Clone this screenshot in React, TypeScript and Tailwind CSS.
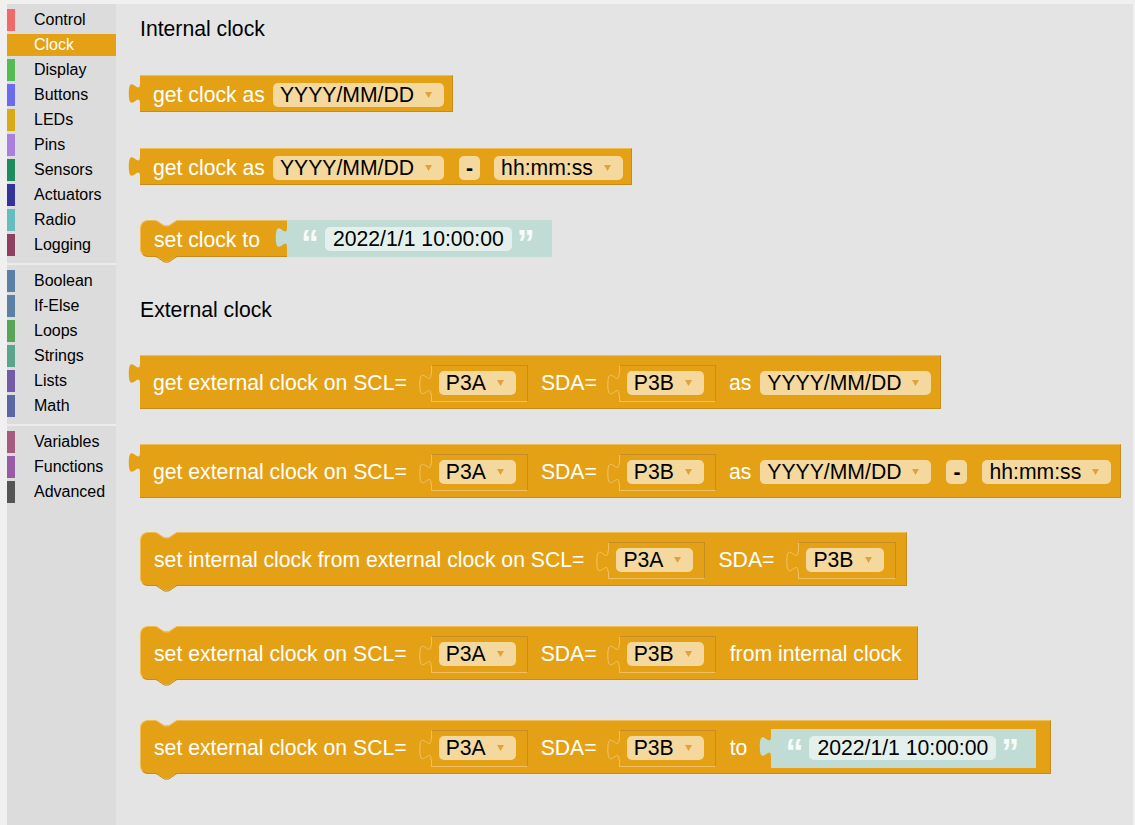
import clsx from 'clsx';

const groups = [
  [
    { name: 'Control', strip: 'bg-[#ef6b6b]' },
    { name: 'Clock', strip: 'bg-[#e5a116]', active: true },
    { name: 'Display', strip: 'bg-[#55bb55]' },
    { name: 'Buttons', strip: 'bg-[#6b6bef]' },
    { name: 'LEDs', strip: 'bg-[#d6ab15]' },
    { name: 'Pins', strip: 'bg-[#a980e0]' },
    { name: 'Sensors', strip: 'bg-[#1f8c5e]' },
    { name: 'Actuators', strip: 'bg-[#34339b]' },
    { name: 'Radio', strip: 'bg-[#66bdbd]' },
    { name: 'Logging', strip: 'bg-[#8f3f60]' },
  ],
  [
    { name: 'Boolean', strip: 'bg-[#5b80a5]' },
    { name: 'If-Else', strip: 'bg-[#5b80a5]' },
    { name: 'Loops', strip: 'bg-[#5ba55b]' },
    { name: 'Strings', strip: 'bg-[#5ba58c]' },
    { name: 'Lists', strip: 'bg-[#745ba5]' },
    { name: 'Math', strip: 'bg-[#5b67a5]' },
  ],
  [
    { name: 'Variables', strip: 'bg-[#a55b80]' },
    { name: 'Functions', strip: 'bg-[#995ba5]' },
    { name: 'Advanced', strip: 'bg-[#555555]' },
  ],
];

const ORANGE = '#e5a116';
const TEAL = '#c0dcd4';

export default function App() {
  return (
    <div className="flex h-[825px] w-[1135px] overflow-hidden bg-[#f0f0f0] pl-[7px] pr-[2px] pt-[4px] font-['Liberation_Sans',Arial,sans-serif]">
      <Toolbox />
      <main className="flex flex-1 flex-col items-start bg-[#e4e4e4] pl-[24px] pt-[12px]">
        <h2 className="text-[21.2px] leading-[26px] text-black">Internal clock</h2>

        <Block className="mt-[33px] h-[37px] pl-[13px] pr-[8px]">
          <span>get clock as</span>
          <Drop label="YYYY/MM/DD" className="ml-[8px]" />
        </Block>

        <Block className="mt-[36px] h-[37px] pl-[13px] pr-[8px]">
          <span>get clock as</span>
          <Drop label="YYYY/MM/DD" className="ml-[8px]" />
          <Dash className="ml-[15px]" />
          <Drop label="hh:mm:ss" className="ml-[14px]" />
        </Block>

        <Block statement open className="mt-[35px] h-[37px] items-stretch pl-[13px]">
          <span className="mt-[2px] self-center">set clock to</span>
          <TextBlock className="-my-[1px] ml-[27px]" />
        </Block>

        <h2 className="mt-[40px] text-[21.2px] leading-[26px] text-black">External clock</h2>

        <Block className="mt-[32px] h-[54px] pl-[13px] pr-[9px]">
          <span>get external clock on SCL=</span>
          <Pin pin="P3A" className="ml-[24px]" />
          <span className="ml-[13px]">SDA=</span>
          <Pin pin="P3B" className="ml-[22px]" />
          <span className="ml-[13px]">as</span>
          <Drop label="YYYY/MM/DD" className="ml-[9px]" />
        </Block>

        <Block className="mt-[35px] h-[54px] pl-[13px] pr-[9px]">
          <span>get external clock on SCL=</span>
          <Pin pin="P3A" className="ml-[24px]" />
          <span className="ml-[13px]">SDA=</span>
          <Pin pin="P3B" className="ml-[22px]" />
          <span className="ml-[13px]">as</span>
          <Drop label="YYYY/MM/DD" className="ml-[9px]" />
          <Dash className="ml-[15px]" />
          <Drop label="hh:mm:ss" className="ml-[15px]" />
        </Block>

        <Block statement className="mt-[34px] h-[54px] pl-[13px] pr-[10px]">
          <span>set internal clock from external clock on SCL=</span>
          <Pin pin="P3A" className="ml-[24px]" />
          <span className="ml-[13px]">SDA=</span>
          <Pin pin="P3B" className="ml-[24px]" />
        </Block>

        <Block statement className="mt-[40px] h-[54px] pl-[13px] pr-[15px]">
          <span>set external clock on SCL=</span>
          <Pin pin="P3A" className="ml-[24px]" />
          <span className="ml-[13px]">SDA=</span>
          <Pin pin="P3B" className="ml-[22px]" />
          <span className="ml-[14px]">from internal clock</span>
        </Block>

        <Block statement className="mt-[40px] h-[54px] pl-[13px] pr-[14px]">
          <span>set external clock on SCL=</span>
          <Pin pin="P3A" className="ml-[24px]" />
          <span className="ml-[13px]">SDA=</span>
          <Pin pin="P3B" className="ml-[22px]" />
          <span className="ml-[14px]">to</span>
          <TextBlock className="ml-[24px] h-[39px]" />
        </Block>
      </main>
    </div>
  );
}

function Toolbox() {
  return (
    <aside className="flex h-full w-[109px] shrink-0 flex-col bg-[#dcdcdc] pt-[5px] text-[16px] text-black">
      {groups.map((group, gi) => (
        <div key={gi} className="flex flex-col">
          {gi > 0 && <div className="mb-[5px] mt-[4px] h-[2px] bg-[#ececec]" />}
          {group.map((cat) => (
            <div
              key={cat.name}
              className={clsx('mb-[3px] flex h-[22px] items-center leading-[22px]', cat.active && 'bg-[#e5a116] text-white')}
            >
              <div className={clsx('h-full w-[8px]', cat.strip)} />
              <span className="ml-[19px]">{cat.name}</span>
            </div>
          ))}
        </div>
      ))}
    </aside>
  );
}

function Block({
  children,
  statement,
  open,
  className,
}: {
  children: React.ReactNode;
  statement?: boolean;
  open?: boolean;
  className?: string;
}) {
  return (
    <div
      className={clsx(
        'relative flex items-center border-b border-t border-b-[#c68c18] border-t-[#efbd58] bg-[#e5a116] text-[21.2px] leading-none text-white',
        !open && 'border-r border-r-[#c68c18] pt-[2px]',
        statement && 'rounded-l-[8px] border-l border-l-[#efbd58]',
        className,
      )}
    >
      {statement ? (
        <>
          <svg className="absolute left-[15px] top-[-1px]" width="22" height="7" viewBox="0 0 22 7">
            <path d="M0,0 L8.4,5.6 L12.6,5.6 L21,0 Z" fill="#e4e4e4" />
            <polyline points="0,0.5 8.4,6.1 12.6,6.1 21,0.5" fill="none" stroke="#efbd58" strokeWidth="1" />
          </svg>
          <svg className="absolute bottom-[-7px] left-[15px]" width="22" height="7" viewBox="0 0 22 7">
            <path d="M0,0 L8.4,5.6 L12.6,5.6 L21,0 Z" fill={ORANGE} />
            <polyline points="0,0.5 8.4,6.1 12.6,6.1 21,0.5" fill="none" stroke="#c68c18" strokeWidth="1" />
          </svg>
        </>
      ) : (
        <OutputTab fill={ORANGE} className="left-[-12px] top-[0px]" />
      )}
      {children}
    </div>
  );
}

function OutputTab({ fill, stroke, className }: { fill: string; stroke?: string; className?: string }) {
  return (
    <svg className={clsx('absolute overflow-visible', className)} width="13" height="30" viewBox="0 0 13 30">
      <path d="M12,7 C12,21 0.8,-4.2 0.8,17.5 S12,14 12,28 L13,28 L13,7 Z" fill={fill} />
      {stroke && <path d="M12,7 C12,21 0.8,-4.2 0.8,17.5 S12,14 12,28" fill="none" stroke={stroke} strokeWidth="1" />}
    </svg>
  );
}

function Drop({ label, className }: { label: string; className?: string }) {
  return (
    <div className={clsx('flex h-[24px] items-center rounded-[5px] bg-[#f4d89d] pl-[7px] pr-[12px] text-black', className)}>
      <span>{label}</span>
      <svg className="ml-[11px]" width="7" height="6" viewBox="0 0 7 6">
        <path d="M0,0 H7 L3.5,6 Z" fill="#e2a23a" />
      </svg>
    </div>
  );
}

function Dash({ className }: { className?: string }) {
  return (
    <div className={clsx('flex h-[24px] w-[21px] items-center justify-center rounded-[5px] bg-[#f4d89d] font-bold text-black', className)}>
      -
    </div>
  );
}

function Pin({ pin, className }: { pin: string; className?: string }) {
  return (
    <div
      className={clsx(
        'relative flex h-[37px] items-center border border-b-[#efc062] border-l-[#efc062] border-r-[#c48d27] border-t-[#c48d27] bg-[#e5a116] pl-[7px] pr-[11px]',
        className,
      )}
    >
      <OutputTab fill={ORANGE} stroke="#f0c468" className="left-[-13px] top-[1px]" />
      <Drop label={pin} />
    </div>
  );
}

function TextBlock({ className }: { className?: string }) {
  return (
    <div className={clsx('relative flex items-center bg-[#c0dcd4] pl-[14px] pr-[17px]', className)}>
      <OutputTab fill={TEAL} className="left-[-12px] top-[0px]" />
      <span className="mt-[10px] text-[36px] font-bold leading-none text-[#f6fbf9]">“</span>
      <div className="ml-[6px] flex h-[24px] items-center rounded-[5px] bg-[#e3f0eb] px-[8px] text-black">2022/1/1 10:00:00</div>
      <span className="ml-[5px] mt-[10px] text-[36px] font-bold leading-none text-[#f6fbf9]">”</span>
    </div>
  );
}
